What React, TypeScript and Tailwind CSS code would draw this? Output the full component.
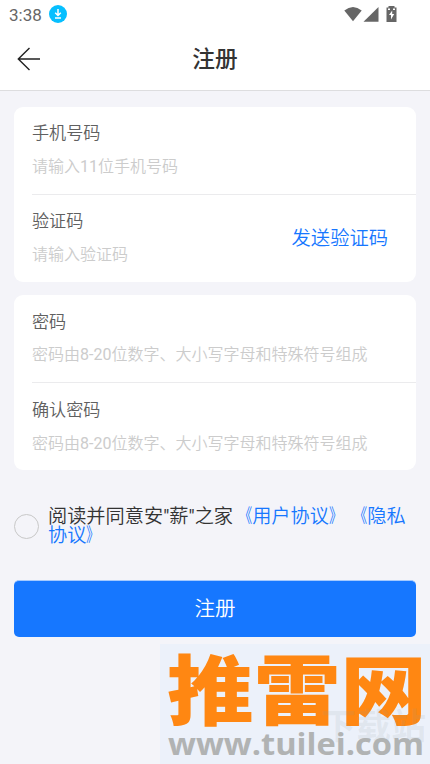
import React from "react";

type FieldProps = { label: string; hint: React.ReactNode; divided?: boolean; action?: string; low?: boolean };

function Field({ label, hint, divided, action, low }: FieldProps) {
  return (
    <div className={`ml-[18px] flex items-center justify-between ${divided ? "h-[88px] border-b border-[#ebebed]" : "h-[87px]"}`}>
      <div className={`flex h-full flex-col ${low ? "pt-[15px]" : "pt-[14px]"}`}>
        <label className="h-[25px] text-[17.1px] leading-[25px] text-[#606060]">{label}</label>
        <span className={`h-6 text-[16px] leading-[24px] text-[#cccccc] ${low && divided ? "mt-2" : "mt-[9px]"}`}>{hint}</span>
      </div>
      {action && (
        <button className="mr-7 text-[19.3px] leading-[28px] text-[#1677ff]">{action}</button>
      )}
    </div>
  );
}

function StatusBar() {
  return (
    <div className="flex h-7 items-center pl-[9px] pr-[32px] text-[#666666]">
      <span className="w-[34px] pt-[2px] text-[17px] font-normal leading-[28px]">3:38</span>
      <svg className="ml-[6px]" width="18" height="18" viewBox="0 0 18 18">
        <circle cx="9" cy="9" r="9" fill="#06bfff" />
        <path d="M9 4v6M6.2 7.8L9 10.5l2.8-2.7M6 13h6" fill="none" stroke="#fff" strokeWidth="1.5" />
      </svg>
      <svg className="ml-auto" width="54" height="18" viewBox="0 0 54 18" fill="#666666">
        <path d="M0.3 5.5Q9 -1.5 17.7 5.5L9 16.3Z" />
        <path d="M34.5 2v14.8H19.5Z" />
        <path fillRule="evenodd" d="M44.5 1h6v1.5h2V17h-10V2.5h2ZM48.2 5.5L45 10h2v4.5L50.2 9H48.2ZM44 3.5v1.5h2V3.5ZM49 3.5v1.5h2V3.5Z" />
      </svg>
    </div>
  );
}

function Watermark() {
  return (
    <svg className="ml-auto mt-[7px] block shrink-0 bg-[#ecf1fa]" width="270" height="120" viewBox="0 0 270 120">
      <g transform="translate(7 74.5) scale(1 0.88)">
        <text x="0" y="0" fontSize="87" fontWeight="900" fill="#ff8712" textLength="260" lengthAdjust="spacingAndGlyphs" className="font-['Noto_Sans_CJK_SC',sans-serif]">推雷网</text>
      </g>
      <text x="161" y="95" fontSize="35" fontWeight="700" fill="#8e9a9e" fillOpacity="0.13" className="font-['Noto_Sans_CJK_SC',sans-serif]">下载站</text>
      <text x="8" y="111" fontSize="30" fontWeight="700" fill="#b1b3b3" textLength="256" lengthAdjust="spacingAndGlyphs" className="font-['Open_Sans',sans-serif]">www.tuilei.com</text>
    </svg>
  );
}

function Open() {
  return <span className="inline-block w-[19.2px] origin-right scale-x-[0.7]">《</span>;
}

function Close() {
  return <span className="inline-block w-[19.2px] origin-left scale-x-[0.7]">》</span>;
}

const passwordHint = (
  <>密码由<span className="font-normal">8-20</span>位数字、大小写字母和特殊符号组成</>
);

export default function App() {
  return (
    <div className="flex h-[764px] w-[430px] flex-col overflow-hidden bg-[#f4f4f9] font-[Roboto,'Noto_Sans_CJK_SC',sans-serif] font-[350] [text-spacing-trim:space-all]">
      <header className="h-[91px] shrink-0 border-b border-[#dddddf] bg-white">
        <StatusBar />
        <div className="grid h-[62px] grid-cols-[1fr_auto_1fr] items-center">
          <button className="ml-[17px] w-6" aria-label="返回">
            <svg width="24" height="24" viewBox="0 0 24 24" fill="none" stroke="#222222" strokeWidth="1.4">
              <path d="M12.5 1L1.3 12l11.2 11M1.3 12H23" />
            </svg>
          </button>
          <h1 className="pt-[2px] text-[22.7px] font-medium leading-[32px] text-[#333333]">注册</h1>
        </div>
      </header>
      <main className="flex flex-col px-[14px] pt-4">
        <section className="h-[175px] rounded-[9px] bg-white">
          <Field label="手机号码" hint={<>请输入<span className="font-normal">11</span>位手机号码</>} divided />
          <Field label="验证码" hint="请输入验证码" action="发送验证码" />
        </section>
        <section className="mt-[13px] h-[175px] rounded-[9px] bg-white">
          <Field label="密码" hint={passwordHint} divided low />
          <Field label="确认密码" hint={passwordHint} low />
        </section>
        <div className="mt-[36px] flex h-[39px] items-center">
          <span className="mt-[2px] h-[25px] w-[25px] shrink-0 rounded-full border border-[#c8c8c8]" />
          <p className="ml-[9px] whitespace-nowrap text-[19.2px] leading-[19px] text-[#333333]">
            阅读并同意安<span className="font-normal">"</span>薪<span className="font-normal">"</span>之家<span className="text-[#1677ff]"><Open />用户协议<Close /><Open />隐私<br />协议<Close /></span>
          </p>
        </div>
        <button className="mt-[35px] h-[57px] rounded-[5px] border-t border-[#a5caff] bg-[#1677ff] pt-px text-[20.5px] text-white">注册</button>
      </main>
      <Watermark />
    </div>
  );
}
